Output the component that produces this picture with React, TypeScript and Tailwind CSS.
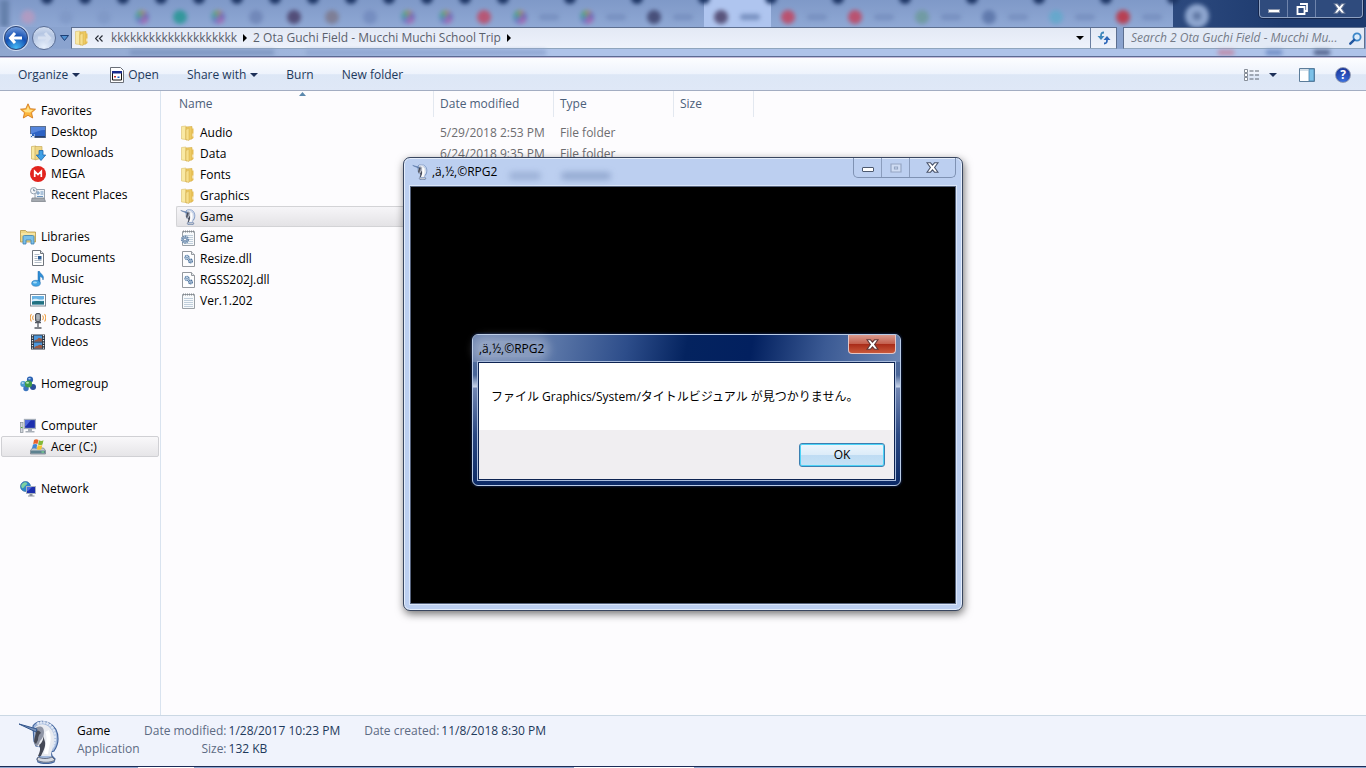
import type { ReactNode } from "react";

type IconProps = { className?: string };

function Icon({ className = "size-4", box = "0 0 16 16", children }: { className?: string; box?: string; children: ReactNode }) {
  return (
    <svg className={`shrink-0 ${className}`} viewBox={box} aria-hidden="true">
      {children}
    </svg>
  );
}

function KnightIcon({ className }: IconProps) {
  return (
    <Icon className={className} box="0 0 42 44">
      <path d="M15 6C18 1 25 0 31 3c6 3 9 9 9 16 0 5-2 9-4 12l-3 1 1 4 3 3-1 3c-4 2-12 2-16 0l-1-3 3-3c1-3 2-6 1-9l-5-1-2-5Z" fill="#a3b9dc" stroke="#44669f" strokeWidth="1.200" />
      <path d="M17 8c3-5 11-5 15 0 4 4 5 10 4 16-1 4-3 7-3 12H22c0-3 3-7 2-12l-4 3-3-5Z" fill="#e9ebf0" />
      <path d="M17 9c2-3 6-3 8-1 2 4 1 9-3 13-1 3-2 5-4 5l-2-3c0-5 2-8 1-14Z" fill="#8f95a5" />
      <path d="M18 11c2-1 4 0 5 2-2 1-3 4-3 7l-2 4-2-2c0-4 2-7 2-11ZM25 15c1 4-1 8-4 10 2 3 1 7-1 11h3c2-5 5-9 4-14Z" fill="#454956" />
      <path d="M19 4c9-5 18 2 18 13 0 5-1 8-3 11" fill="none" stroke="#dfe7f4" strokeWidth="2.500" strokeDasharray="2.500 .7" />
      <path d="M29 11c4 7 0 14-1 23" fill="none" stroke="#fff" strokeWidth="4" />
      <path d="M20 37c4 2 10 2 14 0l3 3c-4 3-14 3-18 0Z" fill="#d5d9e1" stroke="#5c6478" strokeWidth=".9" />
      <path d="M1 4l18 5-1 3Z" fill="#7891b8" stroke="#33568d" strokeWidth="1" />
    </Icon>
  );
}

function FolderIcon({ className }: IconProps) {
  return (
    <Icon className={className}>
      <path d="M1.500 1.500 6 1v13.500l-4.500-.5Z" fill="#f9e9a4" stroke="#dcc069" strokeWidth=".6" />
      <path d="M6 2l6-.5V14l-6 1Z" fill="#efcb62" stroke="#d0aa45" strokeWidth=".6" />
      <path d="M6 4.500 9 3v12.500L6 14.500Z" fill="#f7df8d" stroke="#d2ad4c" strokeWidth=".5" />
      <path d="M12 3.500h1.500V13L12 14Z" fill="#e6bd55" />
      <path d="M13 8.500v3" stroke="#fff" />
    </Icon>
  );
}

function StarIcon() {
  return (
    <Icon>
      <path d="M8 .8l2.200 4.900 5.300.5-4 3.500 1.200 5.300L8 12.300 3.300 15l1.200-5.300-4-3.500 5.300-.5Z" fill="#fcb53b" stroke="#d47b1f" strokeWidth=".9" />
      <path d="M8 3l1.500 3.700 3.500.4-3 2.400-4.500-.2-2.500-2.200 3.500-.4Z" fill="#ffe38b" />
    </Icon>
  );
}

function DesktopIcon() {
  return (
    <Icon>
      <rect x=".5" y="2.500" width="15" height="11" fill="#2c62c4" stroke="#5c6f8e" />
      <path d="M1 3h14v3C10 6 6 8 1 10Z" fill="#5585dc" />
      <path d="M1 12h14v1.500H1Z" fill="#27406e" />
      <rect x="0" y="10" width="4.500" height="4" fill="#dfe8f6" />
      <path d="M1 13l2.500-2.500m-1.500 0h1.500v1.500" stroke="#2561b8" fill="none" />
    </Icon>
  );
}

function DownloadsIcon() {
  return (
    <Icon>
      <path d="M1.500 1.500 6 1v13.500l-4.500-.5Z" fill="#f9e9a4" stroke="#c9ad5c" strokeWidth=".7" />
      <path d="M5 1.500h7V13l-7 2Z" fill="#efd686" stroke="#c9ad5c" strokeWidth=".7" />
      <path d="M9 5.500h4V10h2.700L11 15.500 6.300 10H9Z" fill="#3fa0e6" stroke="#1c64aa" strokeWidth=".8" />
    </Icon>
  );
}

function MegaIcon() {
  return (
    <Icon>
      <circle cx="8" cy="8" r="8" fill="#e2231d" />
      <path d="M4.700 11V5.200L8 8.500l3.300-3.300V11" fill="none" stroke="#fff" strokeWidth="1.700" />
    </Icon>
  );
}

function RecentIcon() {
  return (
    <Icon>
      <path d="M5 2.500h9.500v9H5Z" fill="#eef3f8" stroke="#7d8a99" strokeWidth=".8" />
      <path d="M7 5h2v2H7ZM10.500 5h3M10.500 7h3M7 9.500h6" stroke="#6a93bd" fill="none" />
      <path d="M2 11h12l1.500 3.500h-14Z" fill="#a4a9b0" stroke="#777d85" strokeWidth=".7" />
      <circle cx="3.700" cy="3.700" r="3.200" fill="#f4f6f9" stroke="#8b98a8" strokeWidth=".9" />
      <path d="M3.700 1.800v2h1.600" stroke="#4b6482" fill="none" strokeWidth=".8" />
    </Icon>
  );
}

function LibrariesIcon() {
  return (
    <Icon>
      <path d="M.5 1.500h5l1.500 1.500h8.500v10H.5Z" fill="#f0d784" stroke="#b6984a" strokeWidth=".8" />
      <path d="M1 5h14" stroke="#fff3c2" />
      <path d="M3 15V8c0-1 .5-1.500 1.500-1.500h8c1 0 1.500.5 1.500 1.500v7h-3v-4H6v4Z" fill="#7cc0e8" stroke="#3b7fb0" strokeWidth=".8" />
    </Icon>
  );
}

function DocumentIcon() {
  return (
    <Icon>
      <path d="M2.500.5h8l3 3v12h-11Z" fill="#fff" stroke="#70757d" />
      <path d="M10.500.5v3h3" fill="#dfe4ea" stroke="#70757d" />
      <path d="M4.500 4.500h5M4.500 6.500h3M4.500 8.500h3M4.500 10.500h7M4.500 12.500h7" stroke="#9fabb9" strokeWidth=".8" />
      <rect x="8" y="6" width="3.500" height="3.500" fill="#2e5e96" />
    </Icon>
  );
}

function MusicIcon() {
  return (
    <Icon>
      <path d="M8 .3h1.500c.5 2.700 5.500 3.700 3.500 8.700-.2-2-1.500-3.500-3-3.500v6.500H8Z" fill="#2f8fd8" stroke="#1d68aa" strokeWidth=".5" />
      <ellipse cx="6" cy="12.300" rx="4.300" ry="3" fill="#43a5e4" stroke="#1d68aa" strokeWidth=".5" />
      <ellipse cx="5" cy="11.500" rx="2" ry="1" fill="#a6dbf8" />
    </Icon>
  );
}

function PicturesIcon() {
  return (
    <Icon>
      <rect x=".5" y="2.500" width="15" height="11.500" fill="#fff" stroke="#7d8793" />
      <rect x="2" y="4" width="12" height="8.500" fill="#69b2e4" />
      <path d="M2 8c4-3 7 1 12-1v2H2Z" fill="#d7eefa" />
      <path d="M2 10c4-2 8 0 12-1v3.500H2Z" fill="#22717f" />
    </Icon>
  );
}

function PodcastsIcon() {
  return (
    <Icon>
      <rect x="5.500" y=".5" width="5" height="8" rx="1.500" fill="#8b8f96" stroke="#4e535b" />
      <path d="M6 3h4M6 5h4M8 1v7" stroke="#cfd3d8" strokeWidth=".6" />
      <path d="M8 9v5M4.500 15h7M5 9.500h6" stroke="#555a63" strokeWidth="1.300" />
      <path d="M3.500 2.500c-1 1.300-1 3.200 0 4.500M1.500 1C-.2 3 -.2 6.500 1.500 8.500M12.500 2.500c1 1.300 1 3.200 0 4.500M14.500 1c1.700 2 1.700 5.500 0 7.500" fill="none" stroke="#eda14a" strokeWidth="1.100" />
    </Icon>
  );
}

function VideosIcon() {
  return (
    <Icon>
      <path d="M1 .5h14v15H1Z" fill="#2c3441" />
      <path d="M4 1.500h8v6H4ZM4 8.500h8v6H4Z" fill="#4c97dc" />
      <path d="M4 7.500c2-3 3-1 4-3s3 1 4 0v3ZM4 14.500c1-3 3-2 4-3s3-1 4 0v3Z" fill="#9b5a43" />
      <path d="M2.500 1v14M13.500 1v14" stroke="#e5e9ee" strokeWidth="1.300" strokeDasharray="1.300 1.200" />
    </Icon>
  );
}

function HomegroupIcon() {
  return (
    <Icon>
      <circle cx="10" cy="3.700" r="3.100" fill="#2c63b4" />
      <circle cx="3.300" cy="8" r="3" fill="#4b9bd0" />
      <circle cx="13" cy="11" r="3" fill="#2a4f9b" />
      <circle cx="6" cy="12.500" r="2.700" fill="#3a75bf" />
      <circle cx="8.500" cy="8" r="3.600" fill="#3f9c49" />
      <ellipse cx="7.500" cy="6.700" rx="1.500" ry="1" fill="#b9e8b1" />
      <ellipse cx="9.500" cy="2.700" rx="1.300" ry=".8" fill="#b7d4f5" />
      <ellipse cx="2.800" cy="7" rx="1.200" ry=".7" fill="#d4edf8" />
    </Icon>
  );
}

function ComputerIcon() {
  return (
    <Icon>
      <rect x="4.500" y="1.500" width="11" height="9" fill="#1d2fae" stroke="#a3acb9" strokeWidth="1.300" />
      <path d="M5 2h6L6 8H5Z" fill="#4d68dc" />
      <path d="M8 11h4v2H8ZM5.500 13h9v1.500h-9Z" fill="#a9afb8" />
      <rect x=".5" y="4.500" width="2.500" height="10" fill="#d2d6dc" stroke="#858c96" strokeWidth=".7" />
      <path d="M1 9.500h1.500" stroke="#4fa83f" />
    </Icon>
  );
}

function DriveIcon() {
  return (
    <Icon>
      <path d="M2.500 9h11l2 2.500v3.500H.5v-3.500Z" fill="#c3c9cf" stroke="#727a84" strokeWidth=".7" />
      <path d="M.8 11.500h14.400v3H.8Z" fill="#5e8290" />
      <path d="M11.500 13h2.500" stroke="#7df089" />
      <path d="M4 1c1.500-1 2.800-1 4.500 0L7.500 5c-1.500-.8-2.500-.8-4.300 0Z" fill="#e9622a" />
      <path d="M9 1.300c1.500.8 2.900.8 4.500 0l-1 4.200c-1.500.7-3 .7-4.500 0Z" fill="#83b93a" />
      <path d="M3 5.500c1.500-.8 2.800-.8 4.300 0l-1 4.200c-1.500-.8-2.800-.8-4.400 0Z" fill="#3f86d6" />
      <path d="M7.800 6c1.500.8 2.900.8 4.500 0l-1 4.200c-1.500.7-3 .7-4.500 0Z" fill="#f6c32f" />
    </Icon>
  );
}

function NetworkIcon() {
  return (
    <Icon>
      <circle cx="5.500" cy="5.500" r="5" fill="#2f86c9" stroke="#1f5c94" strokeWidth=".6" />
      <path d="M2 3c2-2 4-2 5-1s-1 2-2 3-2 3-3 2-1-3 0-4ZM8 5l2 1-1 3Z" fill="#7ed0a0" />
      <rect x="6.500" y="5.500" width="9" height="7" fill="#1d2fae" stroke="#aab3c0" />
      <path d="M7 6h5l-4 4H7Z" fill="#4d68dc" />
      <path d="M9.500 13h3v1.500h-3ZM8 14.500h6.500v1H8Z" fill="#8b929d" />
    </Icon>
  );
}

function NotepadIcon({ gear = false }: { gear?: boolean }) {
  return (
    <Icon>
      <path d="M2.500 1.500h12v14h-12Z" fill="#f7f9fb" stroke="#9aa0a6" />
      <path d="M3 1.500h11.500" stroke="#84898f" strokeWidth="2" strokeDasharray="1 1" />
      <path d="M4 5.500h9M4 7.500h9M4 9.500h9M4 11.500h9M4 13.500h9" stroke="#c0cedb" />
      {gear && (
        <>
          <circle cx="5" cy="9.500" r="3.200" fill="#a9bfd6" stroke="#6f8cad" strokeWidth="2" strokeDasharray="1.300 .8" />
          <circle cx="5" cy="9.500" r="1.500" fill="#eef3f8" stroke="#55739a" strokeWidth=".8" />
        </>
      )}
    </Icon>
  );
}

function DllIcon() {
  return (
    <Icon>
      <path d="M2.500.5h9l3 3v12h-12Z" fill="#fdfdfe" stroke="#94989e" />
      <path d="M11.500.5v3h3" fill="#e4e8ec" stroke="#94989e" />
      <circle cx="7" cy="6.500" r="2" fill="#dbe7f3" stroke="#5d83ab" strokeWidth="1.400" strokeDasharray="1.200 .4" />
      <circle cx="10.500" cy="10" r="1.800" fill="#dbe7f3" stroke="#4b719d" strokeWidth="1.400" strokeDasharray="1.200 .4" />
      <circle cx="7" cy="6.500" r=".6" fill="#2c5486" />
      <circle cx="10.500" cy="10" r=".5" fill="#2c5486" />
    </Icon>
  );
}

function Caret({ className = "text-[#1c2f57]" }: IconProps) {
  return (
    <Icon className={`h-1 w-2 ${className}`} box="0 0 8 4">
      <path d="M0 0h8L4 4Z" fill="currentColor" />
    </Icon>
  );
}

function CrumbArrow() {
  return (
    <Icon className="h-2 w-1" box="0 0 4 8">
      <path d="M0 0l4 4-4 4Z" fill="#000" />
    </Icon>
  );
}

function CloseGlyph({ className = "" }: IconProps) {
  return (
    <Icon className={`h-[11px] w-[13px] ${className}`} box="0 0 13 11">
      <path d="M1 .8h3.500l2 2.300 2-2.300H12L8.600 5.500l3.400 4.700H8.500l-2-2.300-2 2.300H1l3.400-4.700Z" fill="#fff" stroke="currentColor" strokeWidth="1.100" />
    </Icon>
  );
}

const multicolor = "bg-[conic-gradient(#c98e6a,#5a5fb8,#b45fa8,#6c6fc4,#3f9e9c,#7a9a4a)]";

const pinnedTabs = [
  "bg-[#b99abf]",
  "bg-[#7f98c6]",
  "bg-[#7f98c6]",
  multicolor,
  "bg-[#1f9590]",
  multicolor,
  "bg-[#6c82b4]",
  "bg-[#463a64]",
  "bg-[#7c7688]",
  "bg-[#7189bd]",
  multicolor,
  multicolor,
  "bg-[#c24560]",
];

const wideTabs = [
  { icon: multicolor },
  { icon: multicolor },
  { icon: "bg-[#3d426c]" },
  { icon: "bg-[#4b4168]", active: true },
  { icon: "bg-[#c24560]" },
  { icon: "bg-[#c24560]" },
  { icon: "bg-[#6d9a9c]" },
  { icon: "bg-[#5a74a8]" },
  { icon: "bg-[#62a9cc]" },
  { icon: "bg-[#c02f3d]" },
];

function TabNotch() {
  return <span className="absolute -right-[6px] -top-2 z-10 size-3 rounded-full bg-[#1d3564] blur-[2px]" />;
}

function BackdropTabs() {
  return (
    <div className="flex h-[27px] overflow-hidden bg-[linear-gradient(90deg,#38558a_80%,#1d3a6e_94%)]" aria-hidden="true">
      <div className="flex bg-[linear-gradient(#7f99c8,#8fa8d4)]">
        <span className="w-[9px] bg-[#6580ab] blur-[2px]" />
        {pinnedTabs.map((color, i) => (
          <span key={i} className="relative flex w-[38px] items-end justify-center pb-[3px]">
            <span className={`size-[14px] rounded-full opacity-80 blur-[2px] ${color}`} />
            <TabNotch />
          </span>
        ))}
        {wideTabs.map((tab, i) => (
          <span key={i} className={`relative flex w-[67px] items-end gap-3 pb-[3px] pl-[10px] ${tab.active ? "bg-[#afc5ef]" : ""}`}>
            <span className={`size-[14px] rounded-full opacity-85 blur-[2px] ${tab.icon}`} />
            <span className="mb-1 h-[6px] w-5 rounded bg-[#7890c0] blur-[2px]" />
            <TabNotch />
          </span>
        ))}
      </div>
      <span className="ml-3 mt-[4px] size-6 rounded-full bg-[#8ea6cf] p-2 blur-[2px]">
        <span className="block size-2 rounded-full bg-[#5f77a3]" />
      </span>
    </div>
  );
}

function WindowControls() {
  return (
    <div className="absolute right-[3px] top-0 flex h-[18px] rounded-b border border-t-0 border-[#8ea1c2] bg-[#2f4b7d] shadow-[0_0_0_1px_#14264d]">
      <button aria-label="Minimize" className="flex w-7 items-end justify-center border-r border-[#6f84ac] pb-1">
        <span className="h-[4px] w-[12px] border border-[#8793ab] bg-white" />
      </button>
      <button aria-label="Restore" className="flex w-7 items-center justify-center border-r border-[#6f84ac]">
        <Icon className="size-3" box="0 0 12 12">
          <path d="M4 1h7v7H9M1.500 4h7v7h-7Z" fill="none" stroke="#fff" strokeWidth="1.800" />
        </Icon>
      </button>
      <button aria-label="Close" className="flex w-[46px] items-center justify-center text-[#5b6d90]">
        <CloseGlyph />
      </button>
    </div>
  );
}

function AddressRow() {
  return (
    <div className="relative flex h-[22px] items-center pl-1 pr-px text-[#5a606c]">
      <button aria-label="Back" className="flex size-6 items-center justify-center rounded-full border border-[#2b4272] bg-[radial-gradient(circle_at_50%_95%,#45b9f5,#1551b4_50%,#8fb0e4)] shadow-[0_0_0_1px_#cfdcf2]">
        <Icon className="size-4">
          <path d="M7 3 2.500 8 7 13M3 8h11" fill="none" stroke="#fff" strokeWidth="3" />
        </Icon>
      </button>
      <button aria-label="Forward" className="ml-1 flex size-6 items-center justify-center rounded-full border border-[#5b6f96] bg-[radial-gradient(circle_at_50%_90%,#e6effc,#b5c6e3_60%,#dfe8f6)]">
        <Icon className="size-4">
          <path d="M9 3l4.500 5L9 13M13 8H2" fill="none" stroke="#d6e0f1" strokeWidth="3" />
        </Icon>
      </button>
      <button aria-label="Recent locations" className="ml-px flex h-5 w-[14px] items-center justify-center">
        <Icon className="h-[6px] w-[9px]" box="0 0 9 6">
          <path d="M.5.5h8L4.500 5.500Z" fill="#4f8fd0" stroke="#1d3f75" />
        </Icon>
      </button>
      <div className="flex h-[22px] min-w-0 flex-1 items-center border border-[#5d6f90] border-b-[#8fa5bd] bg-[linear-gradient(#e3e9f5,#eef2fb)]">
        <FolderIcon className="ml-[2px] size-4" />
        <Icon className="ml-[5px] h-[7px] w-2" box="0 0 8 7">
          <path d="M3.500.5l-3 3 3 3M7.500.5l-3 3 3 3" fill="none" stroke="#2a2f39" strokeWidth="1.200" />
        </Icon>
        <button className="ml-2">kkkkkkkkkkkkkkkkkkkk</button>
        <span className="ml-[6px]"><CrumbArrow /></span>
        <button className="ml-[6px] whitespace-nowrap">2 Ota Guchi Field - Mucchi Muchi School Trip</button>
        <span className="ml-[6px] flex-1"><CrumbArrow /></span>
        <button aria-label="Previous locations" className="flex w-5 justify-center">
          <Caret className="text-black" />
        </button>
        <button aria-label="Refresh" className="flex h-full w-[26px] items-center justify-center border-l border-[#6a7ea0]">
          <Icon className="size-[14px]" box="0 0 14 14">
            <path d="M7 1.500C4 1.500 4 3 4 5" fill="none" stroke="#3f87bb" strokeWidth="1.800" />
            <path d="M.5 5h7L4 9Z" fill="#3f87bb" />
            <path d="M7 12.500c3 0 3-1.500 3-3.500" fill="none" stroke="#2d66b8" strokeWidth="1.800" />
            <path d="M6.500 9h7L10 5Z" fill="#2d66b8" />
          </Icon>
        </button>
      </div>
      <label className="ml-[6px] flex h-[22px] w-[242px] items-center border border-[#5d6f90] border-b-[#8fa5bd] bg-[#e3eaf6]">
        <input
          type="text"
          aria-label="Search folder"
          placeholder="Search 2 Ota Guchi Field - Mucchi Mu..."
          className="min-w-0 flex-1 bg-transparent pl-[7px] italic outline-none placeholder:text-[#757b88]"
        />
        <Icon className="mr-[2px] size-[13px]" box="0 0 13 13">
          <circle cx="8" cy="5" r="3.600" fill="#dcebfa" stroke="#3b86c8" strokeWidth="1.800" />
          <path d="M5.200 7.800 1.300 11.700" stroke="#2257a0" strokeWidth="2.400" strokeLinecap="round" />
        </Icon>
      </label>
    </div>
  );
}

function Toolbar() {
  return (
    <div className="flex h-[33px] items-center border-b border-[#a3adc2] bg-[linear-gradient(#fcfdff,#eef3fc_50%,#dde7f6_52%,#dfe8f7)] pl-[18px] pr-[15px] pt-[2px] text-[#1e395b]">
      <button className="flex items-center gap-1">Organize <Caret /></button>
      <button className="ml-[30px] flex items-center gap-1">
        <Icon className="h-4 w-[14px]" box="0 0 14 16">
          <path d="M.5.5h10l3 3v12H.5Z" fill="#fff" stroke="#6a6f78" />
          <path d="M2.500 5h9v8h-9Z" fill="#fff" stroke="#111" />
          <path d="M2 4h10v2.500H2Z" fill="#1a2d8c" />
          <path d="M4 9h2v1.500H4Z" fill="#c03030" />
          <path d="M7.500 9.500h2V11h-2Z" fill="#1a5dc0" />
        </Icon>
        Open
      </button>
      <button className="ml-7 flex items-center gap-1">Share with <Caret /></button>
      <button className="ml-7">Burn</button>
      <button className="ml-7">New folder</button>
      <div className="ml-auto flex items-center">
        <button aria-label="Change view">
          <Icon className="h-[13px] w-[15px]" box="0 0 15 13">
            <path d="M.5.5h3v3h-3ZM.5 4.500h3v3h-3ZM.5 8.500h3v3h-3Z" fill="#fff" stroke="#7b828d" strokeWidth=".9" />
            <path d="M5.500 2h4M11 2h4M5.500 6h4M11 6h4M5.500 10h4M11 10h4" stroke="#5f6670" />
          </Icon>
        </button>
        <button aria-label="More view options" className="ml-[10px]"><Caret /></button>
        <button aria-label="Show the preview pane" className="ml-[22px]">
          <Icon className="h-[14px] w-4" box="0 0 16 14">
            <path d="M.5.5h15v13H.5Z" fill="#fff" stroke="#5c7c99" />
            <path d="M10 1h5v12h-5Z" fill="#7cc1e8" stroke="#4c83ab" strokeWidth=".8" />
            <path d="M1 2h9" stroke="#a9bfd2" />
          </Icon>
        </button>
        <button aria-label="Help" className="ml-5 flex size-4 items-center justify-center rounded-full border border-[#8d98b3] bg-[radial-gradient(circle_at_50%_100%,#3c72e0,#172f92)] text-[12px] font-bold text-white">
          ?
        </button>
      </div>
    </div>
  );
}

type NavItem = { label: string; icon: ReactNode; selected?: boolean };
type NavGroup = NavItem & { items: NavItem[] };

const navGroups: NavGroup[] = [
  {
    label: "Favorites",
    icon: <StarIcon />,
    items: [
      { label: "Desktop", icon: <DesktopIcon /> },
      { label: "Downloads", icon: <DownloadsIcon /> },
      { label: "MEGA", icon: <MegaIcon /> },
      { label: "Recent Places", icon: <RecentIcon /> },
    ],
  },
  {
    label: "Libraries",
    icon: <LibrariesIcon />,
    items: [
      { label: "Documents", icon: <DocumentIcon /> },
      { label: "Music", icon: <MusicIcon /> },
      { label: "Pictures", icon: <PicturesIcon /> },
      { label: "Podcasts", icon: <PodcastsIcon /> },
      { label: "Videos", icon: <VideosIcon /> },
    ],
  },
  { label: "Homegroup", icon: <HomegroupIcon />, items: [] },
  { label: "Computer", icon: <ComputerIcon />, items: [{ label: "Acer (C:)", icon: <DriveIcon />, selected: true }] },
  { label: "Network", icon: <NetworkIcon />, items: [] },
];

function Sidebar() {
  return (
    <nav className="flex w-[161px] shrink-0 flex-col gap-[21px] border-r border-[#d9e3ef] px-px pt-[9px] text-black">
      {navGroups.map((group) => (
        <div key={group.label}>
          <a href="#" className="flex h-[21px] items-center gap-[5px] pl-[19px]">
            {group.icon}
            {group.label}
          </a>
          {group.items.map((item) => (
            <a
              key={item.label}
              href="#"
              className={`flex h-[21px] items-center gap-[5px] rounded-[2px] border pl-7 ${item.selected ? "border-[#d0d0d4] bg-[linear-gradient(#f9f8fa,#e6e5e8)]" : "border-transparent"}`}
            >
              {item.icon}
              {item.label}
            </a>
          ))}
        </div>
      ))}
    </nav>
  );
}

type FileRow = { name: string; icon: ReactNode; date: string; type: string; size: string; selected?: boolean };

const files: FileRow[] = [
  { name: "Audio", icon: <FolderIcon />, date: "5/29/2018 2:53 PM", type: "File folder", size: "" },
  { name: "Data", icon: <FolderIcon />, date: "6/24/2018 9:35 PM", type: "File folder", size: "" },
  { name: "Fonts", icon: <FolderIcon />, date: "", type: "File folder", size: "" },
  { name: "Graphics", icon: <FolderIcon />, date: "", type: "", size: "" },
  { name: "Game", icon: <KnightIcon className="size-4" />, date: "", type: "", size: "", selected: true },
  { name: "Game", icon: <NotepadIcon gear />, date: "", type: "", size: "" },
  { name: "Resize.dll", icon: <DllIcon />, date: "", type: "", size: "" },
  { name: "RGSS202J.dll", icon: <DllIcon />, date: "", type: "", size: "" },
  { name: "Ver.1.202", icon: <NotepadIcon />, date: "", type: "", size: "" },
];

function FileList() {
  return (
    <main className="min-w-0 flex-1 pl-[15px]">
      <table className="w-[578px] table-fixed border-separate border-spacing-0 text-left">
        <colgroup>
          <col className="w-[257px]" />
          <col className="w-[120px]" />
          <col className="w-[120px]" />
          <col />
        </colgroup>
        <thead className="text-[#4c607a]">
          <tr className="h-[26px]">
            <th className="relative pl-[3px] font-normal">
              <Icon className="absolute left-[123px] top-px h-1 w-[7px]" box="0 0 7 4">
                <path d="M0 4h7L3.500 0Z" fill="#5b88ad" />
              </Icon>
              Name
            </th>
            <th className="border-l border-[#e3e8f0] pl-[6px] font-normal">Date modified</th>
            <th className="border-l border-[#e3e8f0] pl-[6px] font-normal">Type</th>
            <th className="border-x border-[#e3e8f0] pl-[6px] font-normal">Size</th>
          </tr>
        </thead>
        <tbody className="text-[#6d6d70] before:block before:h-[5px]">
          {files.map((file, i) => {
            const cell = file.selected ? "border-y border-[#d3d3d6] bg-[linear-gradient(#f6f5f8,#e4e3e6)]" : "";
            return (
              <tr key={i} className="h-[21px]">
                <td className={`p-0 ${cell} ${file.selected ? "rounded-l-[2px] border-l" : "pl-px"}`}>
                  <span className="flex items-center gap-1 pl-[3px] text-black">
                    {file.icon}
                    {file.name}
                  </span>
                </td>
                <td className={`py-0 pl-[7px] pr-0 ${cell}`}>{file.date}</td>
                <td className={`py-0 pl-[7px] pr-0 ${cell}`}>{file.type}</td>
                <td className={`py-0 pl-[7px] pr-0 ${cell}`}>{file.size}</td>
              </tr>
            );
          })}
        </tbody>
      </table>
    </main>
  );
}

function DetailsPane() {
  return (
    <footer className="flex h-[51px] items-start border-t border-[#cbd8e4] bg-[#f0f3fc] pl-[18px] pt-1 leading-[18px]">
      <KnightIcon className="h-11 w-[42px]" />
      <div className="ml-[17px] mt-[2px] w-[67px]">
        <p className="text-black">Game</p>
        <p className="text-[#5d6b83]">Application</p>
      </div>
      <dl className="mt-[2px] grid grid-cols-[auto_auto] gap-x-[2px] text-[#1e395b]">
        <dt className="text-right text-[#5d6b83]">Date modified:</dt>
        <dd>1/28/2017 10:23 PM</dd>
        <dt className="text-right text-[#5d6b83]">Size:</dt>
        <dd>132 KB</dd>
      </dl>
      <dl className="ml-6 mt-[2px] flex gap-[2px] text-[#1e395b]">
        <dt className="text-[#5d6b83]">Date created:</dt>
        <dd>11/8/2018 8:30 PM</dd>
      </dl>
    </footer>
  );
}

function GameWindow() {
  return (
    <section className="absolute left-[403px] top-[157px] flex h-[454px] w-[560px] flex-col rounded-[7px] border border-[#39465f] bg-[#bccff0] px-[6px] pb-[6px] shadow-[inset_0_0_0_1px_#e4edfb,1px_3px_8px_rgba(0,0,0,0.55)]">
      <header className="relative flex h-[28px] shrink-0 items-center gap-1 pl-[2px] text-black">
        <KnightIcon className="size-4" />
        <h2>,ä,½,©RPG2</h2>
        <span className="ml-2 mt-2 h-2 w-8 rounded-full bg-[#8ea4cb] opacity-70 blur-[3px]" aria-hidden="true" />
        <span className="ml-4 mt-2 h-2 w-[50px] rounded-full bg-[#8299c3] opacity-70 blur-[3px]" aria-hidden="true" />
        <div className="ml-auto flex h-5 self-start rounded-b-[5px] border border-t-0 border-[#7f92b3]">
          <button aria-label="Minimize game" className="flex w-7 items-center justify-center border-r border-[#8b9dbd]">
            <span className="mt-1 h-[5px] w-3 rounded-[1px] border border-[#4d5a70] bg-white" />
          </button>
          <button aria-label="Maximize game" disabled className="flex w-7 items-center justify-center border-r border-[#8b9dbd]">
            <Icon className="h-[10px] w-3" box="0 0 12 10">
              <path d="M1 1h10v8H1ZM4.500 4h3v2h-3Z" fill="#cfdcf3" stroke="#95a6c4" strokeWidth="1.200" />
            </Icon>
          </button>
          <button aria-label="Close game" className="flex w-[45px] items-center justify-center text-[#48526a]">
            <CloseGlyph />
          </button>
        </div>
      </header>
      <div className="flex-1 border border-[#55627b] bg-black shadow-[0_0_0_1px_#dbe6f8]" />
    </section>
  );
}

function ErrorDialog() {
  return (
    <section
      role="dialog"
      aria-labelledby="dialog-title"
      className="absolute left-[472px] top-[334px] flex h-[152px] w-[429px] flex-col rounded-[6px] border border-[#b9cbe6] bg-[linear-gradient(#54709f,#496598_40px,#c9d5ea_52px,#7186b3_53px,#2a4782_100px,#0c2a66)] px-[5px] pb-[5px] shadow-[0_0_2px_1px_#0a1736]"
    >
      <header className="-mx-[5px] flex h-[27px] shrink-0 items-center rounded-t-[5px] bg-[linear-gradient(100deg,#7086b0,#5874a6_20%,#2d4d8a_36%,#04235f_50%,#02205f_65%,#3b5a94_82%,#6b85b3)] pl-[5px] pr-1">
        <h2 id="dialog-title" className="rounded-full bg-white/25 px-px text-black shadow-[0_0_8px_5px_rgba(255,255,255,0.25)]">
          ,ä,½,©RPG2
        </h2>
        <button aria-label="Close dialog" className="ml-auto flex h-[19px] w-12 items-center justify-center self-start rounded-b-[4px] border border-t-0 border-[#e4c6c6] bg-[linear-gradient(#d99a8f,#c4604e_48%,#a82a17_50%,#c9583a)] text-[#5e3434]">
          <CloseGlyph />
        </button>
      </header>
      <div className="flex flex-1 flex-col border border-[#0d2352] bg-[#f0eef1] shadow-[0_0_0_1px_#a9bcdc]">
        <p className="flex flex-1 items-center bg-white pl-3 text-black">
          ファイル Graphics/System/タイトルビジュアル が見つかりません。
        </p>
        <div className="flex h-[49px] items-center justify-end pr-[9px]">
          <button className="h-6 w-[86px] rounded-[3px] border border-[#3c7fb1] bg-[linear-gradient(#eef6fc,#dcecf9_48%,#bfdcf3_50%,#c5e2f6)] text-black shadow-[inset_0_0_0_1px_#4cd3f7]">
            OK
          </button>
        </div>
      </div>
    </section>
  );
}

export default function App() {
  return (
    <div className="relative flex min-h-screen flex-col overflow-hidden bg-[#fdfcfe] font-['Open_Sans','Noto_Sans_CJK_JP',sans-serif] text-[12px] leading-4">
      <header className="relative h-[57px] overflow-hidden border-b border-[#5b6a92] bg-[linear-gradient(#8aa3cf_48px,#b2c6ea)]">
        <BackdropTabs />
        <AddressRow />
        <WindowControls />
        <div className="flex h-2 gap-8 bg-[linear-gradient(90deg,#8fa6cf,#aec3e9_40%)] pl-[130px] pt-px" aria-hidden="true">
          <span className="h-[5px] w-36 bg-[#7d95c0] blur-[2px]" />
          <span className="h-[5px] w-60 bg-[#8fa5d0] blur-[2px]" />
          <span className="ml-auto h-[5px] w-4 bg-[#c08ba8] blur-[2px]" />
          <span className="h-[5px] w-4 bg-[#6f8cc4] blur-[2px]" />
          <span className="mr-9 h-[5px] w-4 bg-[#4f5f88] blur-[2px]" />
        </div>
      </header>
      <div className="border-t border-[#c5bdd9]">
        <Toolbar />
      </div>
      <div className="flex flex-1">
        <Sidebar />
        <FileList />
      </div>
      <DetailsPane />
      <div className="flex h-[2px] gap-[380px] border-t border-[#1c2c57] bg-[#8fa6cf] pl-[138px]" aria-hidden="true">
        <span className="h-px w-14 bg-white" />
        <span className="h-px w-[120px] bg-white" />
      </div>
      <GameWindow />
      <ErrorDialog />
    </div>
  );
}
